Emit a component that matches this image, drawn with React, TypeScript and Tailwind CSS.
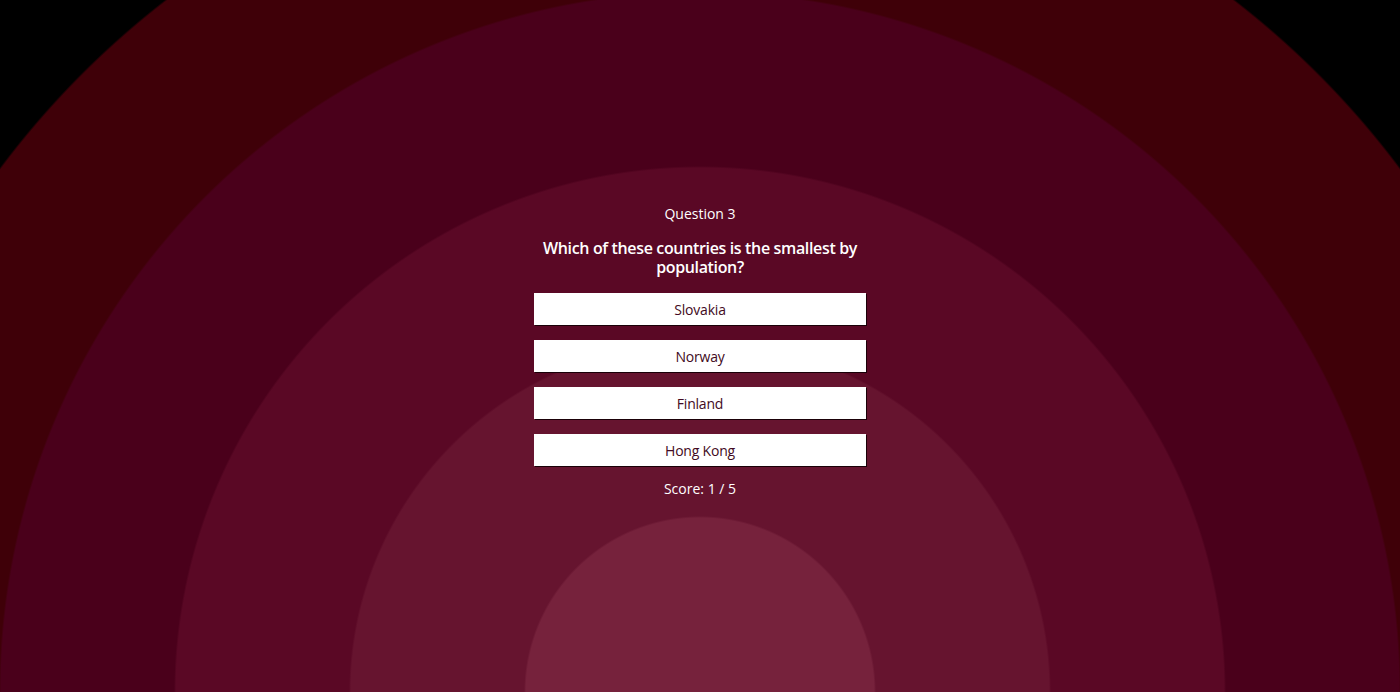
const answers = ['Slovakia', 'Norway', 'Finland', 'Hong Kong']

const App = () => {
  return (
    <div className="flex h-[692px] w-full flex-col items-center bg-[radial-gradient(circle_at_50%_100%,#76223c_174px,#66142f_176px,#66142f_349px,#5a0825_351px,#5a0825_524px,#4a001b_526px,#4a001b_699px,#3f0008_701px,#3f0008_873px,#000_875px)] pt-[204px] font-['Open_Sans',sans-serif] text-white">
      <p className="text-[14px] leading-5">Question 3</p>
      <h2 className="mt-[15px] w-[332px] text-center text-[16px] font-semibold leading-[19px] tracking-[-0.35px]">
        Which of these countries is the smallest by population?
      </h2>
      <div className="mt-[16px] flex w-[332px] flex-col gap-[15px]">
        {answers.map((a) => (
          <button
            key={a}
            className="h-[32px] w-full bg-white text-[14px] tracking-[-0.2px] text-[#420a22] shadow-[1px_1px_0_#1a0008]"
          >
            {a}
          </button>
        ))}
      </div>
      <p className="mt-[13px] text-[14px] leading-5">Score: 1 / 5</p>
    </div>
  )
}

export default App
